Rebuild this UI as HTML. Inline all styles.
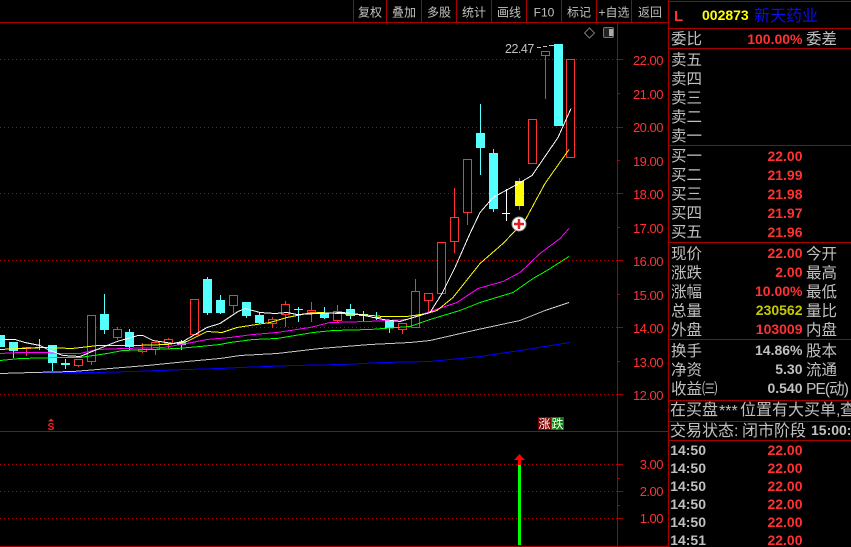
<!DOCTYPE html>
<html lang="zh"><head><meta charset="utf-8"><title>002873</title>
<style>
html,body{margin:0;padding:0;background:#000;width:851px;height:547px;overflow:hidden}
svg{display:block;position:absolute;left:0;top:0}
text{white-space:pre}
.c{font-family:"Liberation Sans","WenQuanYi Zen Hei","Noto Sans CJK SC",sans-serif;font-size:15.5px;fill:#c0c0c0}
.t{font-family:"Liberation Sans","WenQuanYi Zen Hei","Noto Sans CJK SC",sans-serif;font-size:12px;fill:#c0c0c0;text-anchor:middle}
.v{font-family:"Liberation Sans",sans-serif;font-size:14px;font-weight:700;fill:#ff3232;text-anchor:end}
.g{fill:#c0c0c0}.y{fill:#c8c800}
.a{font-family:"Liberation Sans",sans-serif;font-size:13px;letter-spacing:-.5px;fill:#ff3232;text-anchor:end}
.m{fill:none;stroke-width:1;shape-rendering:crispEdges}
</style></head><body>
<svg width="851" height="547" viewBox="0 0 851 547" xmlns="http://www.w3.org/2000/svg">
<rect width="851" height="547" fill="#000"/>
<!-- grid -->
<g stroke="#c00000" stroke-width="1" stroke-dasharray="1 3" shape-rendering="crispEdges" fill="none">
<path d="M0 59.5H617M0 127.5H617M0 193.5H617M0 260.5H617M0 327.5H617M0 394.5H617M0 464.5H617M0 491.5H617M0 518.5H617"/>
</g>
<!-- frame -->
<g stroke="#a80000" stroke-width="1" shape-rendering="crispEdges" fill="none">
<path d="M0 22.5H668M0 431.5H668M0 546.5H668M617.5 22V546M668.5 0V547"/>
<path d="M353.5 0V22M386.5 0V22M421.5 0V22M456.5 0V22M491.5 0V22M526.5 0V22M561.5 0V22M596.5 0V22M631.5 0V22"/>
<path d="M668 1.5H851M668 28.5H851M668 48.5H851M668 145.5H851M668 242.5H851M668 339.5H851M668 400.5H851M668 421.5H851M668 440.5H851"/>
<path d="M617 59.5h6M617 93.5h3M617 127.5h6M617 160.5h3M617 193.5h6M617 227.5h3M617 260.5h6M617 294.5h3M617 327.5h6M617 361.5h3M617 394.5h6M617 464.5h6M617 478.5h3M617 491.5h6M617 505.5h3M617 518.5h6"/>
</g>
<!-- toolbar -->
<text class="t" x="370" y="16.500">复权</text><text class="t" x="404" y="16.500">叠加</text><text class="t" x="439" y="16.500">多股</text><text class="t" x="474" y="16.500">统计</text><text class="t" x="509" y="16.500">画线</text><text class="t" x="544" y="16.500">F10</text><text class="t" x="579" y="16.500">标记</text><text class="t" x="614" y="16.500">+自选</text><text class="t" x="650" y="16.500">返回</text>
<!-- axis labels -->
<text class="a" x="663" y="65">22.00</text><text class="a" x="663" y="99">21.00</text><text class="a" x="663" y="132">20.00</text><text class="a" x="663" y="166">19.00</text><text class="a" x="663" y="199">18.00</text><text class="a" x="663" y="233">17.00</text><text class="a" x="663" y="266">16.00</text><text class="a" x="663" y="300">15.00</text><text class="a" x="663" y="333">14.00</text><text class="a" x="663" y="367">13.00</text><text class="a" x="663" y="400">12.00</text>
<text class="a" x="663" y="469">3.00</text><text class="a" x="663" y="496">2.00</text><text class="a" x="663" y="523">1.00</text>
<!-- wicks red -->
<path class="m" stroke="#ff3232" d="M26.500 347V356M78.500 359V367M91.500 315V365M117.500 327V340M142.500 343V353M155.500 342V355M168.500 338V349M233.500 295V313M272.500 317V328M285.500 301V327M311.500 302V322M337.500 305V322M402.500 323V334M415.500 279V327M428.500 293V312M454.500 188V253M467.500 159V225M545.500 51V99M519.500 178V210"/>
<!-- red bodies -->
<g fill="#000" stroke="#ff3232" shape-rendering="crispEdges">
<rect x="22.500" y="347.500" width="8" height="1"/><rect x="74.500" y="359.500" width="8" height="6"/><rect x="87.500" y="315.500" width="8" height="46"/><rect x="113.500" y="329.500" width="8" height="8"/><rect x="138.500" y="349.500" width="8" height="2"/><rect x="151.500" y="342.500" width="8" height="7"/><rect x="164.500" y="339.500" width="8" height="4"/><rect x="190.500" y="299.500" width="8" height="35"/><rect x="229.500" y="295.500" width="8" height="10"/><rect x="268.500" y="319.500" width="8" height="4"/><rect x="281.500" y="304.500" width="8" height="10"/><rect x="307.500" y="310.500" width="8" height="2"/><rect x="333.500" y="311.500" width="8" height="9"/><rect x="398.500" y="323.500" width="8" height="6"/><rect x="411.500" y="291.500" width="8" height="36"/><rect x="424.500" y="293.500" width="8" height="7"/><rect x="437.500" y="242.500" width="8" height="51"/><rect x="450.500" y="217.500" width="8" height="24"/><rect x="463.500" y="159.500" width="8" height="53"/><rect x="528.500" y="119.500" width="8" height="44"/><rect x="541.500" y="51.500" width="8" height="4"/><rect x="566.500" y="59.500" width="8" height="98"/>
</g>
<!-- cyan -->
<path class="m" stroke="#54ffff" d="M13.500 342V358M39.500 339V350M35 347.500H44M52.500 345V371M65.500 359V369M104.500 294V334M129.500 329V350M181.500 340V350M207.500 277V315M220.500 295V314M246.500 302V318M259.500 312V324M298.500 307V322M294 309.500H303M324.500 307V319M350.500 304V319M363.500 311V321M376.500 312V320M372 317.500H381M389.500 321V333M480.500 104V175M493.500 149V212"/>
<g fill="#54ffff" shape-rendering="crispEdges">
<rect x="0" y="335" width="5" height="12"/><rect x="9" y="342" width="9" height="9"/><rect x="48" y="345" width="9" height="18"/><rect x="61" y="363" width="9" height="2"/><rect x="100" y="314" width="9" height="16"/><rect x="125" y="332" width="9" height="15"/><rect x="177" y="342" width="9" height="3"/><rect x="203" y="279" width="9" height="34"/><rect x="216" y="300" width="9" height="13"/><rect x="242" y="302" width="9" height="14"/><rect x="255" y="315" width="9" height="8"/><rect x="320" y="313" width="9" height="5"/><rect x="346" y="309" width="9" height="7"/><rect x="359" y="314" width="9" height="2"/><rect x="385" y="321" width="9" height="7"/><rect x="476" y="133" width="9" height="15"/><rect x="489" y="153" width="9" height="56"/><rect x="554" y="44" width="9" height="82"/>
<rect x="515" y="181" width="9" height="25" fill="#ffff00"/>
</g>
<!-- white cross -->
<path class="m" stroke="#fff" d="M506.500 189V221M502 213.500H510"/>
<!-- MAs -->
<path class="m" stroke="#0000ff" d="M0 373.500L33 372.500L97 372.500L133 371.500L187 369.500L220 368.500L240 367.500L293 365.500L343 364.500L383 362.500L430 361.500L480 356.500L520 350.500L570 342.500"/>
<path class="m" stroke="#c8c8c8" d="M0 373.500L33 372.500L73 371.500L110 368.500L147 365.500L187 361.500L220 358.500L240 355.500L277 353.500L320 348.500L370 344.500L410 342.500L430 340.500L478 329.500L520 320.500L545 310.500L569 302.500"/>
<path class="m" stroke="#00ff00" d="M0 360.500L20 358.500L60 357.500L80 357.500L107 353.500L123 350.500L150 349.500L177 348.500L200 346.500L220 344.500L230 342.500L253 339.500L277 338.500L313 332.500L333 330.500L370 329.500L410 326.500L430 319.500L460 310.500L480 302.500L513 292.500L533 278.500L547 270.500L569 256.500"/>
<path class="m" stroke="#ff00ff" d="M0 353.500L20 352.500L45 352.500L60 353.500L80 353.500L97 349.500L123 348.500L163 347.500L187 343.500L207 339.500L230 337.500L253 334.500L277 332.500L310 327.500L330 322.500L367 321.500L407 319.500L430 311.500L457 302.500L478 288.500L503 281.500L520 272.500L540 253.500L560 238.500L569 228.500"/>
<path class="m" stroke="#ffff00" d="M0 349.500L20 348.500L45 347.500L72 348.500L98 345.500L133 345.500L167 344.500L187 341.500L207 331.500L222 332.500L237 327.500L250 325.500L270 322.500L287 317.500L307 313.500L320 312.500L360 314.500L383 316.500L407 316.500L427 313.500L437 310.500L453 297.500L480 263.500L503 243.500L525 220.500L545 183.500L569 149.500"/>
<path class="m" stroke="#fff" d="M0 339.500L15 339.500L25 342.500L40 345.500L50 350.500L63 355.500L80 356.500L97 349.500L117 341.500L138 335.500L143 335.500L153 340.500L173 343.500L183 341.500L207 327.500L220 323.500L238 311.500L245 308.500L260 312.500L275 313.500L287 312.500L297 314.500L318 313.500L343 312.500L360 314.500L383 319.500L400 321.500L410 318.500L430 312.500L442 293.500L455 267.500L470 233.500L480 212.500L493 197.500L515 185.500L532 175.500L558 137.500L571 108.500"/>
<!-- marker -->
<circle cx="519" cy="224" r="7" fill="#fff" stroke="#999" stroke-width="1"/>
<path d="M519 219v10M514 224h10" stroke="#e02020" stroke-width="2.500" fill="none"/>
<!-- high label -->
<text x="505" y="53" font-family="Liberation Sans,sans-serif" font-size="12.500" letter-spacing="-.5" fill="#c0c0c0">22.47</text>
<path class="m" stroke="#c0c0c0" d="M537 47.500h4M543 46.500h4M549 45.500h6"/>
<!-- top icons -->
<path d="M589.500 28L594.500 33L589.500 38L584.500 33Z" fill="none" stroke="#777" stroke-width="1"/>
<rect x="603.500" y="27.500" width="10" height="10" rx="1.500" fill="#222" stroke="#777"/><rect x="609" y="29" width="4" height="7" fill="#aaa"/>
<!-- S marker -->
<text x="51" y="430" text-anchor="middle" font-family="Liberation Sans,sans-serif" font-size="10px" font-weight="700" fill="#ff2020">S</text>
<path d="M51 418.500l3 3h-6z" fill="#ff2020"/>
<!-- badges -->
<rect x="538" y="417" width="13" height="13" fill="#800000"/><rect x="551" y="417" width="13" height="13" fill="#008000"/>
<text class="t" x="544.500" y="428" style="fill:#fff">涨</text><text class="t" x="557.500" y="428" style="fill:#fff">跌</text>
<!-- volume -->
<rect x="518" y="464" width="3" height="81" fill="#00ff00"/>
<path d="M519.500 454L525 460H521V465H518V460H514Z" fill="#ff0000"/>
<!-- right panel -->
<text x="674" y="21" font-family="Liberation Sans,sans-serif" font-size="15px" font-weight="700" fill="#ff3232">L</text>
<text x="702" y="20" font-family="Liberation Sans,sans-serif" font-size="14px" font-weight="700" fill="#ffff00">002873</text>
<text class="c" x="754" y="21" style="fill:#0c0cf0;font-size:16px">新天药业</text>
<text class="c" x="671" y="44">委比</text><text class="v" x="802.500" y="44">100.00%</text><text class="c" x="806" y="44">委差</text>
<text class="c" x="671" y="65">卖五</text><text class="c" x="671" y="84">卖四</text><text class="c" x="671" y="103">卖三</text><text class="c" x="671" y="122">卖二</text><text class="c" x="671" y="141">卖一</text>
<text class="c" x="671" y="161">买一</text><text class="v" x="802.500" y="161">22.00</text>
<text class="c" x="671" y="180">买二</text><text class="v" x="802.500" y="180">21.99</text>
<text class="c" x="671" y="199">买三</text><text class="v" x="802.500" y="199">21.98</text>
<text class="c" x="671" y="218">买四</text><text class="v" x="802.500" y="218">21.97</text>
<text class="c" x="671" y="237">买五</text><text class="v" x="802.500" y="237">21.96</text>
<text class="c" x="671" y="259">现价</text><text class="v" x="802.500" y="258">22.00</text><text class="c" x="806" y="259">今开</text>
<text class="c" x="671" y="278">涨跌</text><text class="v" x="802.500" y="277">2.00</text><text class="c" x="806" y="278">最高</text>
<text class="c" x="671" y="297">涨幅</text><text class="v" x="802.500" y="296">10.00%</text><text class="c" x="806" y="297">最低</text>
<text class="c" x="671" y="316">总量</text><text class="v y" x="802.500" y="315">230562</text><text class="c" x="806" y="316">量比</text>
<text class="c" x="671" y="335">外盘</text><text class="v" x="802.500" y="334">103009</text><text class="c" x="806" y="335">内盘</text>
<text class="c" x="671" y="356">换手</text><text class="v g" x="802.500" y="355">14.86%</text><text class="c" x="806" y="356">股本</text>
<text class="c" x="671" y="375">净资</text><text class="v g" x="802.500" y="374">5.30</text><text class="c" x="806" y="375">流通</text>
<text class="c" x="671" y="394">收益㈢</text><text class="v g" x="802.500" y="393">0.540</text><text class="c" x="806" y="394" letter-spacing="-.9">PE(动)</text>
<text class="c" x="670" y="415" style="font-size:16px">在买盘<tspan x="719" dy="1">***</tspan><tspan x="740" dy="-1">位置有大买单</tspan><tspan x="836">,</tspan><tspan x="840">查</tspan></text>
<text class="c" x="670" y="436" style="font-size:16px">交易状态:<tspan x="742">闭市阶段</tspan></text>
<text x="811" y="435" font-family="Liberation Sans,sans-serif" font-size="14px" font-weight="700" fill="#c0c0c0">15:00:</text>
<g>
<text class="v g" x="706" y="455">14:50</text><text class="v" x="802.500" y="455">22.00</text>
<text class="v g" x="706" y="473">14:50</text><text class="v" x="802.500" y="473">22.00</text>
<text class="v g" x="706" y="491">14:50</text><text class="v" x="802.500" y="491">22.00</text>
<text class="v g" x="706" y="509">14:50</text><text class="v" x="802.500" y="509">22.00</text>
<text class="v g" x="706" y="527">14:50</text><text class="v" x="802.500" y="527">22.00</text>
<text class="v g" x="706" y="545">14:51</text><text class="v" x="802.500" y="545">22.00</text>
</g>
</svg>
</body></html>
